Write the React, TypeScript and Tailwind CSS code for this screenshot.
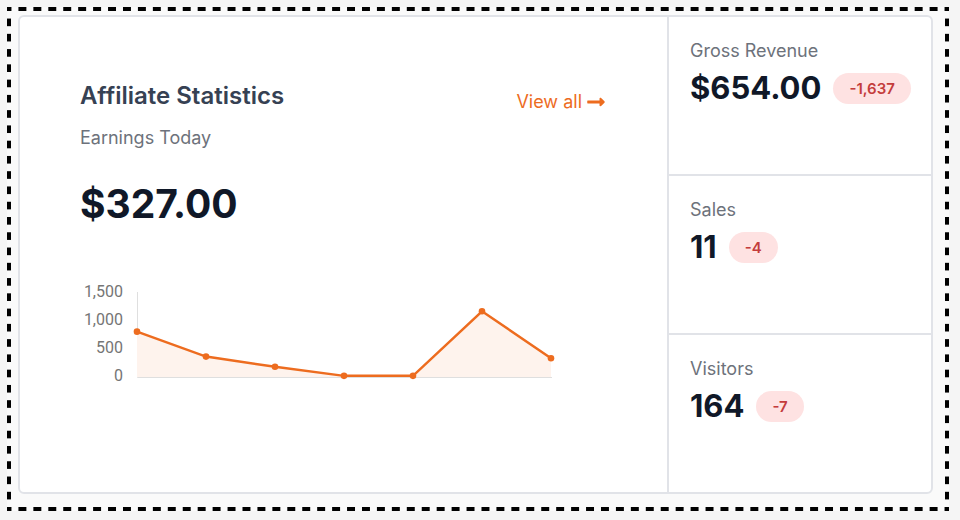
import { FaLongArrowAltRight } from 'react-icons/fa'

interface Stat { label: string; value: string; change: string }

const stats: Stat[] = [
  { label: 'Gross Revenue', value: '$654.00', change: '-1,637' },
  { label: 'Sales', value: '11', change: '-4' },
  { label: 'Visitors', value: '164', change: '-7' },
]

const earnings = [800, 360, 180, 20, 20, 1160, 330]
const ticks = ['1,500', '1,000', '500', '0']

function EarningsChart() {
  const points = earnings.map((v, i) => [4 + i * 69, 88 - (v / 1500) * 85])
  const line = points.map(p => p.join(',')).join(' ')

  return (
    <div className="flex gap-2.5 text-base leading-7 font-['Roboto',sans-serif] text-[#757575]">
      <div className="w-[43px] text-right">
        {ticks.map(t => <div key={t}>{t}</div>)}
      </div>
      <svg width="422" height="92" viewBox="0 0 422 92" className="mt-[11px]" role="img" aria-label="Earnings">
        <path d="M4.5 3V88.5H419" fill="none" stroke="#dfdfdf" />
        <polygon points={`4,88 ${line} 418,88`} fill="#fef3ed" />
        <polyline points={line} fill="none" stroke="#ed6c1f" strokeWidth="2.5" />
        {points.map(([x, y]) => <circle key={x} cx={x} cy={y} r="3.3" fill="#ed6c1f" />)}
      </svg>
    </div>
  )
}

function StatCard({ label, value, change }: Stat) {
  return (
    <div className="flex-1 px-[21px] pt-5">
      <p className="text-lg leading-7 text-[#6d727b]">{label}</p>
      <div className="flex items-center gap-3">
        <p className="text-[31px] leading-[46px] font-bold text-gray-900">{value}</p>
        <span className="rounded-full bg-[#fee2e2] px-4 text-[15px] leading-[31px] font-semibold text-[#c43c3c]">
          {change}
        </span>
      </div>
    </div>
  )
}

export default function App() {
  return (
    <div className="flex min-h-screen bg-[#f5f5f5] pt-[7px] pr-[11px] pb-[9px] pl-[7px] font-['Inter',sans-serif]">
      {/* Dashed selection frame, one gradient strip per side */}
      <div
        className="flex flex-1 bg-[#fafafa] pt-2 pr-4 pb-[17px] pl-[11px]
          bg-[image:linear-gradient(90deg,#000_27%,transparent_27%_73%,#000_73%),linear-gradient(90deg,#000_27%,transparent_27%_73%,#000_73%),linear-gradient(#000_27%,transparent_27%_73%,#000_73%),linear-gradient(#000_27%,transparent_27%_73%,#000_73%)]
          [background-size:calc(100%/63)_4px,calc(100%/63)_4px,4px_calc(100%/33),4px_calc(100%/33)]
          [background-position:top,bottom,left,right]
          [background-repeat:round_no-repeat,round_no-repeat,no-repeat_round,no-repeat_round]"
      >
        <main className="flex flex-1 rounded-md border-2 border-[#e1e3e8] bg-white">
          <section className="flex-1 pt-16 pr-[61px] pl-[60px]">
            <div className="flex items-start justify-between">
              <h1 className="text-2xl leading-[30px] font-semibold text-gray-700">Affiliate Statistics</h1>
              <a href="#" className="mt-[9px] flex items-center gap-1 text-lg leading-6 text-[#ed6c1f]">
                View all <FaLongArrowAltRight size={20} />
              </a>
            </div>
            <p className="mt-[10px] text-lg leading-7 text-[#6d727b]">Earnings Today</p>
            <p className="mt-7 text-[39px] leading-12 font-bold text-gray-900">$327.00</p>
            <div className="mt-[50px]">
              <EarningsChart />
            </div>
          </section>

          <aside className="flex w-[264px] flex-col divide-y-2 divide-[#e1e3e8] border-l-2 border-[#e1e3e8]">
            {stats.map(s => <StatCard key={s.label} {...s} />)}
          </aside>
        </main>
      </div>
    </div>
  )
}
